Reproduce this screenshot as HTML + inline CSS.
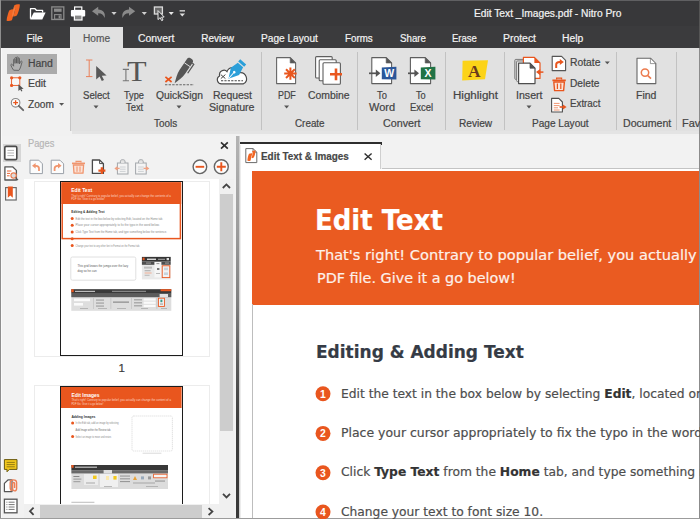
<!DOCTYPE html>
<html><head><meta charset="utf-8"><title>Nitro Pro</title>
<style>
*{box-sizing:border-box;margin:0;padding:0}
html,body{width:700px;height:519px;overflow:hidden;background:#f1f1f1}
body{position:relative;font-family:"Liberation Sans",sans-serif;font-size:12px;color:#444}
.a{position:absolute}
.t{position:absolute;white-space:nowrap;-webkit-text-stroke:0.2px;transform-origin:0 50%}
.sep{position:absolute;top:52px;height:78px;width:1px;background:#c2c2c2}
svg{position:absolute;left:0;top:0;overflow:hidden}
</style></head><body>
<div class="a" style="left:0px;top:0px;width:700px;height:48px;background:#38383a;border-top:1px solid #606062"></div>
<div class="a" style="left:0px;top:26px;width:700px;height:22px;background:#3b3b3d;"></div>
<div class="a" style="left:70px;top:27px;width:53px;height:22px;background:#e1e1e1;"></div>
<div class="a" style="left:0px;top:48px;width:72px;height:88px;background:#f1f1f1;"></div>
<div class="a" style="left:71px;top:48px;width:629px;height:82.6px;background:#e1e1e1;"></div>
<div class="a" style="left:70px;top:49px;width:1px;height:82px;background:#c6c6c6;"></div>
<div class="a" style="left:71.5px;top:130.6px;width:628.5px;height:3.8px;background:#e4e4e4;"></div>
<div class="sep" style="left:261px"></div>
<div class="sep" style="left:357px"></div>
<div class="sep" style="left:445px"></div>
<div class="sep" style="left:504px"></div>
<div class="sep" style="left:616px"></div>
<div class="sep" style="left:676px"></div>
<div class="a" style="left:7px;top:54px;width:50px;height:20px;background:#ababab;"></div>
<div class="a" style="left:0px;top:136px;width:700px;height:383px;background:#f2f2f2;"></div>
<div class="a" style="left:3px;top:144px;width:18px;height:18px;background:#d6d6d6;"></div>
<div class="a" style="left:24px;top:179px;width:195px;height:325px;background:#ffffff;"></div>
<div class="a" style="left:219px;top:179px;width:15px;height:325px;background:#f0f0f0;"></div>
<div class="a" style="left:220px;top:194px;width:13px;height:237px;background:#cdcdcd;"></div>
<div class="a" style="left:24px;top:504px;width:195px;height:14px;background:#f0f0f0;"></div>
<div class="a" style="left:40px;top:505px;width:162px;height:13px;background:#cdcdcd;"></div>
<div class="a" style="left:219px;top:504px;width:15px;height:14px;background:#f0f0f0;"></div>
<div class="a" style="left:238.4px;top:136px;width:1.4px;height:383px;background:#d2d2d2;"></div>
<div class="a" style="left:236px;top:136px;width:2.5px;height:383px;background:linear-gradient(#b4b4b4 0,#9c9c9c 94px,#808080 164px,#5c5c5c 224px,#3e3e3e 284px,#383838 383px);"></div>
<div class="a" style="left:240px;top:141.8px;width:142px;height:2.8px;background:#2e2e2e;"></div>
<div class="a" style="left:240px;top:144px;width:141px;height:25px;background:#ffffff;border-right:1px solid #cfcfcf"></div>
<div class="a" style="left:382px;top:168px;width:318px;height:1.5px;background:#c4c4c4;"></div>
<div class="a" style="left:240px;top:169px;width:460px;height:350px;background:#ffffff;"></div>
<div class="a" style="left:239.8px;top:144.6px;width:1.6px;height:375px;background:#ececec;"></div>
<div class="a" style="left:252px;top:171px;width:448px;height:133.5px;background:#ea5b21;"></div>
<div class="a" style="left:252px;top:304px;width:1px;height:215px;background:#bdbdbd;"></div>
<div class="a" style="left:0px;top:0px;width:1px;height:519px;background:#8e8e8e;"></div>
<div class="a" style="left:1px;top:48px;width:1px;height:471px;background:#fafafa;"></div>
<div class="a" style="left:698.7px;top:0px;width:1.3px;height:48px;background:#555555;"></div>
<div class="a" style="left:698.7px;top:48px;width:1.3px;height:471px;background:#8c8c8c;"></div>
<div class="a" style="left:0px;top:517.6px;width:700px;height:1.4px;background:#9c9c9c;"></div>
<div class="a" style="left:34px;top:180.5px;width:176px;height:176px;background:#fff;border:1px solid #ececec"></div>
<div class="a" style="left:60px;top:181px;width:122.5px;height:175px;background:#fff;border:1.5px solid #1c1c1c"></div>
<div class="a" style="left:34px;top:384.5px;width:176px;height:130px;background:#fff;border:1px solid #ececec;border-bottom:0"></div>
<div class="a" style="left:60px;top:386px;width:122.5px;height:125px;background:#fff;border:1.5px solid #1c1c1c;border-bottom:0"></div>
<div class="a" style="left:24px;top:504px;width:195px;height:14px;background:#f0f0f0;"></div>
<div class="a" style="left:40px;top:505px;width:162px;height:13px;background:#cdcdcd;"></div>
<svg width="700" height="519" viewBox="0 0 700 519"><path d="M9.2,10.4 C11,9.2 13,8.9 14.6,9.3 L12.9,16.4 C12.9,16.4 12.6,18.6 11.9,20.2 C10.2,21 8.2,21.1 6.6,20.7 C6.7,18.6 7.1,16.8 7.7,15 C8.1,13.2 8.5,11.8 9.2,10.4 Z" fill="#f26522"/>
<path d="M14.4,5.3 C16,4.3 18,4 19.9,4.5 C19.8,6.6 19.4,8.6 18.8,10.6 C18.3,12.4 17.6,14.2 16.8,15.6 C15.6,16.3 14.4,16.6 13.4,16.5 L15.2,9.2 C15.2,9.2 13.9,6.8 14.4,5.3 Z" fill="#f26522"/>
<path d="M13.4,16.5 L15.2,9.2 L14.4,5.3 C13.6,7 13.2,9 12.9,10.8 C12.4,12.6 12.1,14.4 11.9,16.2 C12.4,16.4 12.9,16.5 13.4,16.5 Z" fill="#f47a3c"/>
<path d="M30.5,18.8 V8.7 H35 L36.4,10.3 H42.6 V12.6" fill="none" stroke="#fff" stroke-width="1.3" stroke-linejoin="round"/>
<path d="M33.8,12.4 H45.6 L42.3,19.4 H30.2 Z" fill="#fff"/>
<rect x="51.8" y="6.9" width="12" height="12.6" fill="none" stroke="#8c8c8c" stroke-width="1.3"/>
<rect x="54" y="8.6" width="7.6" height="3.2" fill="#8c8c8c"/>
<rect x="54.6" y="14.6" width="6.4" height="4.6" fill="none" stroke="#8c8c8c" stroke-width="1.1"/>
<rect x="58.6" y="15.4" width="1.6" height="3" fill="#8c8c8c"/>
<rect x="74.6" y="7" width="7.2" height="3.4" fill="#38383a" stroke="#fff" stroke-width="1.2"/>
<rect x="70.9" y="10" width="14.3" height="6.4" rx="1" fill="#fff"/>
<rect x="74.4" y="15" width="7.6" height="5" fill="#8a8a8a" stroke="#fff" stroke-width="1.2"/>
<path d="M92,11.2 L98.2,6.8 V9.6 C103.2,9.6 105.8,13.2 104.6,18 C103.6,14.8 101.8,13.2 98.2,13.2 V15.8 Z" fill="#8a8a8a"/>
<path d="M135.2,11.2 L129,6.8 V9.6 C124,9.6 121.4,13.2 122.6,18 C123.6,14.8 125.4,13.2 129,13.2 V15.8 Z" fill="#8a8a8a"/>
<path d="M111.4,11.9 H116.6 L114,14.9 Z" fill="#cfcfcf"/>
<path d="M141.70000000000002,11.9 H146.9 L144.3,14.9 Z" fill="#cfcfcf"/>
<path d="M168.6,11.9 H173.79999999999998 L171.2,14.9 Z" fill="#e6e6e6"/>
<rect x="154.4" y="7" width="8" height="7" fill="#6a6a6a" stroke="#dcdcdc" stroke-width="1.3"/>
<path d="M158,10.6 L158,19.6 L160.2,17.6 L161.6,20.6 L163,20 L161.6,17.2 L164.2,17 Z" fill="#38383a" stroke="#e8e8e8" stroke-width="1"/>
<rect x="179.6" y="10.2" width="5.4" height="1.3" fill="#e0e0e0"/>
<path d="M179.60000000000002,13.4 H185.0 L182.3,16.4 Z" fill="#e0e0e0"/>
<path d="M13.6,70.2 C12.4,68.6 11.4,66.6 10.9,65.2 C10.6,64.2 11.8,63.8 12.4,64.6 L13.6,66.2 V59.6 C13.6,58.6 15,58.6 15,59.6 V63.4 V58.2 C15,57.2 16.5,57.2 16.5,58.2 V63.2 V57.6 C16.5,56.6 18,56.6 18,57.6 V63.4 V58.6 C18,57.6 19.5,57.6 19.5,58.6 V64 L20.6,61.6 C21,60.6 22.4,61 22,62.2 L20.6,67 C20.2,68.6 19.4,69.6 18.8,70.4 Z" fill="#b2b2b2" stroke="#5e5e5e" stroke-width="0.9" stroke-linejoin="round"/>
<rect x="11.6" y="77.8" width="8.2" height="7.6" fill="#f8f8f8" stroke="#e9561e" stroke-width="0.9"/>
<circle cx="11.6" cy="77.8" r="1.6" fill="#e9561e"/>
<circle cx="19.8" cy="77.8" r="1.6" fill="#e9561e"/>
<circle cx="11.6" cy="85.4" r="1.6" fill="#e9561e"/>
<path d="M18.4,84.2 V91 L20.2,89.4 L21.4,91.6 L22.4,91 L21.4,89 L23.6,88.8 Z" fill="#555"/>
<circle cx="15.6" cy="102.8" r="4.3" fill="#fafafa" stroke="#8a8a8a" stroke-width="1.1"/>
<path d="M18.8,105.8 L23.2,110.2" stroke="#666" stroke-width="1.8" stroke-linecap="round"/>
<path d="M13.2,102.6 H18 M15.6,100.2 V105" stroke="#e9561e" stroke-width="1.3"/>
<path d="M59.1,103.0 H64.1 L61.6,105.80000000000001 Z" fill="#555"/>
<path d="M86,60 H92.4 M86,76.6 H92.4 M89.2,60 V76.6" stroke="#e9825c" stroke-width="1" fill="none"/>
<path d="M96.2,66 V79.6 L99.6,76.6 L101.8,81 L104,80 L101.8,75.8 L106.6,75.4 Z" fill="#585858"/>
<path d="M93.5,105.6 H98.5 L96,108.4 Z" fill="#555"/>
<path d="M122.8,69.4 H129 M122.8,80.8 H129 M125.9,69.4 V80.8" stroke="#777" stroke-width="1.1" fill="none"/>
<text x="127" y="81.3" font-family="Liberation Serif,serif" font-size="30" fill="#565656" textLength="19.6" lengthAdjust="spacingAndGlyphs">T</text>
<g transform="translate(0.6 0) rotate(34 183 70)"><path d="M179.6,58.6 C179.6,55.6 186.4,55.6 186.4,58.6 V72 C186.4,77 184.2,82 183,86 C181.8,82 179.6,77 179.6,72 Z" fill="#565656"/><path d="M179.6,63.6 H186.4" stroke="#e1e1e1" stroke-width="0.9"/><path d="M188.2,59 V70.4" stroke="#565656" stroke-width="1.3"/><path d="M186.4,59.6 H188.2" stroke="#565656" stroke-width="1.1"/></g>
<path d="M165.4,76.8 L171.6,82 M171.6,76.8 L165.4,82" stroke="#e9561e" stroke-width="1.7"/>
<path d="M165,84.7 H194" stroke="#666" stroke-width="1.1" stroke-dasharray="2.4,1.2"/>
<path d="M176.5,105.6 H181.5 L179,108.4 Z" fill="#555"/>
<path d="M221.4,83.8 C217.4,83.8 215.6,78.4 219.6,76 C218.6,71 224.4,68.6 227,71.6 C229.4,65.6 238.6,66.4 239.6,72.6 C246.4,71.8 249.2,81 243.4,83.8 Z" fill="#fff" stroke="#4a4a4a" stroke-width="1.2"/>
<path d="M220.8,74.6 L225.4,78.6 M225.4,74.6 L220.8,78.6" stroke="#444" stroke-width="1"/>
<path d="M221,80.8 H243" stroke="#444" stroke-width="1.1" stroke-dasharray="2.2,1.2"/>
<g transform="translate(-0.6 0.8) rotate(41 236 70) translate(236 70) scale(1.1) translate(-236 -70)"><path d="M232.4,59.2 H239.6 V62 H232.4 Z M232.8,63 H239.2 L241,70.6 L236,79.6 L231,70.6 Z" fill="#2b9fd9"/><path d="M236,79 V72.4" stroke="#fff" stroke-width="0.9"/><circle cx="236" cy="71.6" r="1.2" fill="#fff"/></g>
<path d="M276.6,57.6 H290.20000000000005 L295.6,63.0 V83.6 H276.6 Z" fill="#fff" stroke="#666" stroke-width="1.1" stroke-linejoin="round"/>
<path d="M290.20000000000005,57.6 L295.6,63.0 H290.20000000000005 Z" fill="#555" stroke="#666" stroke-width="0.66" stroke-linejoin="round"/>
<path d="M284.20,73.60 L296.60,73.60 M286.02,69.22 L294.78,77.98 M290.40,67.40 L290.40,79.80 M294.78,69.22 L286.02,77.98 " stroke="#e9561e" stroke-width="2"/>
<path d="M284.1,105.6 H289.1 L286.6,108.4 Z" fill="#555"/>
<rect x="315.6" y="56.6" width="16.599999999999966" height="21.4" rx="1" fill="#fff" stroke="#5e5e5e" stroke-width="1.1"/>
<rect x="319.2" y="59.8" width="17.0" height="21.0" rx="1" fill="#fff" stroke="#5e5e5e" stroke-width="1.1"/>
<rect x="323" y="62.8" width="17.399999999999977" height="21.400000000000006" rx="1" fill="#fff" stroke="#5e5e5e" stroke-width="1.1"/>
<path d="M330,74.3 H342 M336,68.4 V80.2" stroke="#e9561e" stroke-width="2.6"/>
<path d="M371.8,57.6 H386.20000000000005 L391.6,63.0 V83.6 H371.8 Z" fill="#fff" stroke="#5e5e5e" stroke-width="1.1" stroke-linejoin="round"/>
<path d="M386.20000000000005,57.6 L391.6,63.0 H386.20000000000005 Z" fill="#555" stroke="#5e5e5e" stroke-width="0.66" stroke-linejoin="round"/>
<path d="M369,73.3 H377.4" stroke="#555" stroke-width="1.7"/><path d="M375.79999999999995,69.6 L380.4,73.3 L375.79999999999995,77 Z" fill="#555"/>
<path d="M381.8,67.4 L396.4,66.8 V79.6 L381.8,79.2 Z" fill="#2b579a"/>
<text x="389.1" y="77.2" font-family="Liberation Sans,sans-serif" font-size="10.5" font-weight="bold" fill="#fff" text-anchor="middle">W</text>
<path d="M410.4,57.6 H425.20000000000005 L430.6,63.0 V83.6 H410.4 Z" fill="#fff" stroke="#5e5e5e" stroke-width="1.1" stroke-linejoin="round"/>
<path d="M425.20000000000005,57.6 L430.6,63.0 H425.20000000000005 Z" fill="#555" stroke="#5e5e5e" stroke-width="0.66" stroke-linejoin="round"/>
<path d="M408,73.3 H416" stroke="#555" stroke-width="1.7"/><path d="M414.4,69.6 L419,73.3 L414.4,77 Z" fill="#555"/>
<path d="M420.8,67.4 L435.4,66.8 V79.6 L420.8,79.2 Z" fill="#217346"/>
<text x="428.1" y="77.2" font-family="Liberation Sans,sans-serif" font-size="10.5" font-weight="bold" fill="#fff" text-anchor="middle">X</text>
<path d="M462.6,60.8 L488,60.2 L485,79.2 L462.2,80.4 Z" fill="#fcd318"/>
<text x="474.3" y="77.2" font-family="Liberation Serif,serif" font-size="17.4" font-weight="bold" fill="#6a3a1c" text-anchor="middle">A</text>
<rect x="514.8" y="59.4" width="14" height="20" rx="1" fill="#d2d2d2" stroke="#7c7c7c" stroke-width="1"/>
<rect x="516.6" y="61" width="14" height="20.6" rx="1" fill="#ececec" stroke="#7c7c7c" stroke-width="1"/>
<path d="M523.4,57.4 H534.4 L540,63 V78.4 H523.4 Z" fill="#fff" stroke="#e9561e" stroke-width="1.2" stroke-linejoin="round"/>
<path d="M534.4,57.4 L540,63 H534.4 Z" fill="#e9561e"/>
<path d="M518.6,63.2 H530 L535,68.2 V83.6 H518.6 Z" fill="#fff" stroke="#4e4e4e" stroke-width="1.2" stroke-linejoin="round"/>
<path d="M530,63.2 L535,68.2 H530 Z" fill="#555" stroke="#4e4e4e" stroke-width="0.72" stroke-linejoin="round"/>
<path d="M543.4,72.1 H538.6" stroke="#e9561e" stroke-width="1.5"/><path d="M540.2,69 L536,72.1 L540.2,75.2 Z" fill="#e9561e"/>
<path d="M526.5,105.6 H531.5 L529,108.4 Z" fill="#555"/>
<path d="M552.2,56.4 H561.6 L565.6,60.4 V70.6 H552.2 Z" fill="#fff" stroke="#555" stroke-width="1.1" stroke-linejoin="round"/>
<path d="M556.2,68 V64.6 C556.2,62.6 557.6,62 559.6,62 H560.2" fill="none" stroke="#e9561e" stroke-width="2"/><path d="M559.8,59 L563.8,62 L559.8,65 Z" fill="#e9561e"/>
<path d="M604.8,61.5 H609.8 L607.3,64.3 Z" fill="#555"/>
<path d="M552.4,80.4 H565.8" stroke="#e9561e" stroke-width="1.8"/><path d="M556.6,79.4 V78.2 H561.6 V79.4" fill="none" stroke="#e9561e" stroke-width="1.2"/>
<path d="M553.8,82 H564.4 L563.6,90.6 H554.6 Z" fill="#fbe3d8" stroke="#e9561e" stroke-width="1.4" stroke-linejoin="round"/>
<path d="M557.4,83.6 V89 M560.8,83.6 V89" stroke="#e9561e" stroke-width="1.2"/>
<path d="M551.6,98.4 H558.8 L562.4,102.0 V112 H551.6 Z" fill="#fff" stroke="#4e4e4e" stroke-width="1.1" stroke-linejoin="round"/>
<path d="M553.8,103.4 H559.6 M553.8,105.6 H559.6 M553.8,107.8 H558 M553.8,110 H559.6" stroke="#ef8a62" stroke-width="0.9"/>
<path d="M559.6,107 H563.6" stroke="#e9561e" stroke-width="1.6"/><path d="M563,104.4 L566.6,107 L563,109.6 Z" fill="#e9561e"/>
<path d="M637,58.2 H650.4 L655.8,63.6 V83.6 H637 Z" fill="#fff" stroke="#666" stroke-width="1.1" stroke-linejoin="round"/>
<path d="M650.4,58.2 L655.8,63.6 H650.4 Z" fill="#fff" stroke="#666" stroke-width="0.66" stroke-linejoin="round"/>
<circle cx="645" cy="72.6" r="3.7" fill="none" stroke="#ec7b4e" stroke-width="1.5"/><path d="M647.8,75.6 L651,78.6" stroke="#ec7b4e" stroke-width="1.6"/>
<rect x="4.8" y="146.4" width="12" height="13.2" rx="1.4" fill="#fff" stroke="#4c4c4c" stroke-width="1.6"/>
<path d="M7.4,150.4 H14 M7.4,153 H14 M7.4,155.6 H14" stroke="#b5b5b5" stroke-width="1"/>
<path d="M4.9,166.8 H12.6 L16.4,170.4 V180 H4.9 Z" fill="#fff" stroke="#555" stroke-width="1.3" stroke-linejoin="round"/>
<path d="M7,171 H11.4 M7,173.4 H10 M7,175.8 H9.6" stroke="#e9561e" stroke-width="0.9"/>
<circle cx="13.6" cy="175.6" r="2.7" fill="#dcdcdc" stroke="#ec7b4e" stroke-width="1.1"/><path d="M15.6,177.6 L18,180.2" stroke="#555" stroke-width="1.2"/>
<rect x="5.6" y="187.6" width="10.6" height="12.4" fill="#fff" stroke="#6a6a6a" stroke-width="1.2"/>
<path d="M7.8,186.4 H12.8 V197.8 L10.3,195.4 L7.8,197.8 Z" fill="#e9561e"/>
<path d="M4.4,459.6 H17 V469.4 H9.4 L7,471.8 V469.4 H4.4 Z" fill="#f2c81e" stroke="#6a5a10" stroke-width="1" stroke-linejoin="round"/>
<path d="M6.6,462.4 H14.8 M6.6,464.6 H14.8 M6.6,466.8 H14.8" stroke="#8a7412" stroke-width="0.9"/>
<path d="M4.4,483.4 L8.2,479.8 H12 V491.6 H4.4 Z" fill="#fff" stroke="#555" stroke-width="1.2" stroke-linejoin="round"/>
<path d="M12,490.6 C10.4,490.6 10.2,489 10.2,487.6 V482.6 C10.2,479 16.6,479 16.6,482.6 V488.4 C16.6,491.6 12.6,491.6 12.6,488.6 V483.6 C12.6,482.2 14.6,482.2 14.6,483.6 V488" fill="none" stroke="#ee7f55" stroke-width="1.4"/>
<rect x="4.4" y="499.2" width="12.6" height="13.6" fill="#fff" stroke="#555" stroke-width="1.3"/>
<path d="M8.6,502.2 H14.6 M8.6,504.6 H14.6 M8.6,507 H14.6 M8.6,509.4 H14.6" stroke="#777" stroke-width="1"/><path d="M6.4,502.2 H7.4 M6.4,504.6 H7.4 M6.4,507 H7.4 M6.4,509.4 H7.4" stroke="#777" stroke-width="1"/>
<path d="M30,160.2 H38.8 L42.4,163.79999999999998 V173.6 H30 Z" fill="#fcfcfc" stroke="#9aa0a8" stroke-width="1" stroke-linejoin="round"/>
<path d="M39,171 V168.4 C39,166.4 37.8,165.8 36,165.8 H35" fill="none" stroke="#f0956e" stroke-width="1.8"/><path d="M35.6,163 L32,165.8 L35.6,168.6 Z" fill="#f0956e"/>
<path d="M51.2,160.2 H60.0 L63.6,163.79999999999998 V173.6 H51.2 Z" fill="#fcfcfc" stroke="#9aa0a8" stroke-width="1" stroke-linejoin="round"/>
<path d="M54.6,171 V168.4 C54.6,166.4 55.8,165.8 57.6,165.8 H58.6" fill="none" stroke="#f0956e" stroke-width="1.8"/><path d="M58,163 L61.6,165.8 L58,168.6 Z" fill="#f0956e"/>
<path d="M72,163.4 H85" stroke="#f0956e" stroke-width="1.7"/><path d="M76,162.6 V161.4 H81 V162.6" fill="none" stroke="#f0956e" stroke-width="1.1"/>
<path d="M73.4,165 H83.6 L83,173.2 H74 Z" fill="#fbe3d8" stroke="#f0956e" stroke-width="1.3" stroke-linejoin="round"/><path d="M77,166.6 V171.8 M80,166.6 V171.8" stroke="#f0956e" stroke-width="1.1"/>
<path d="M92.4,160 H99.6 L103.4,163.6 V173.4 H92.4 Z" fill="#fff" stroke="#4a4a4a" stroke-width="1.3" stroke-linejoin="round"/><path d="M99.6,160 V163.6 H103.4" fill="none" stroke="#4a4a4a" stroke-width="1"/>
<path d="M98.4,170.6 H105.4 M101.9,167.2 V174" stroke="#e9561e" stroke-width="2.4"/>
<rect x="117.4" y="163" width="10.6" height="11" fill="#f4f4f4" stroke="#a2a6aa" stroke-width="1"/>
<path d="M120.4,163 V161.2 C120.4,159.2 125.0,159.2 125.0,161.2 V163" fill="#e4e4e4" stroke="#a2a6aa" stroke-width="1"/>
<path d="M119.80000000000001,167 H125.60000000000001 M119.80000000000001,169.2 H125.60000000000001 M119.80000000000001,171.4 H125.60000000000001" stroke="#c4c8cc" stroke-width="0.8"/>
<path d="M119.6,168.4 H116" stroke="#f0a080" stroke-width="1.3"/><path d="M117.4,166 L114.4,168.4 L117.4,170.8 Z" fill="#f0a080"/>
<rect x="135.6" y="163" width="10.6" height="11" fill="#f4f4f4" stroke="#a2a6aa" stroke-width="1"/>
<path d="M138.6,163 V161.2 C138.6,159.2 143.2,159.2 143.2,161.2 V163" fill="#e4e4e4" stroke="#a2a6aa" stroke-width="1"/>
<path d="M138.0,167 H143.79999999999998 M138.0,169.2 H143.79999999999998 M138.0,171.4 H143.79999999999998" stroke="#c4c8cc" stroke-width="0.8"/>
<path d="M143.6,168.4 H147" stroke="#f0a080" stroke-width="1.3"/><path d="M146,166 L149.4,168.4 L146,170.8 Z" fill="#f0a080"/>
<circle cx="199.9" cy="166.8" r="6.8" fill="#fcfcfc" stroke="#666" stroke-width="1.4"/><path d="M195.6,166.8 H204.2" stroke="#e9561e" stroke-width="1.9"/>
<circle cx="221.3" cy="166.8" r="7" fill="#fcfcfc" stroke="#666" stroke-width="1.4"/><path d="M216.8,166.8 H225.8 M221.3,162.3 V171.3" stroke="#e9561e" stroke-width="1.9"/>
<path d="M221,142.4 L227.8,148.6 M227.8,142.4 L221,148.6" stroke="#2e2e2e" stroke-width="1.7"/>
<path d="M222.8,188 L226.4,184.4 L230,188" fill="none" stroke="#444" stroke-width="1.8"/>
<path d="M223,493.8 L226.5,497.4 L230,493.8" fill="none" stroke="#444" stroke-width="1.8"/>
<path d="M33.6,507.6 L30,511.2 L33.6,514.8" fill="none" stroke="#444" stroke-width="1.8"/>
<path d="M208.6,508.2 L212.4,511.6 L208.6,515" fill="none" stroke="#444" stroke-width="1.8"/>
<rect x="61.4" y="182.4" width="119.8" height="21.6" fill="#e9561e"/>
<text x="71.2" y="191.8" font-family="Liberation Sans,sans-serif" font-size="5" font-weight="bold" fill="#fff" textLength="21" lengthAdjust="spacingAndGlyphs">Edit Text</text>

<rect x="62.2" y="183" width="118.2" height="55.6" fill="none" stroke="#e9561e" stroke-width="1.5"/>
<text x="71.3" y="196.6" font-family="Liberation Sans,sans-serif" font-size="3.1" font-weight="normal" fill="#fbd5c3" textLength="99.6" lengthAdjust="spacingAndGlyphs">That's right! Contrary to popular belief, you actually can change the contents of a</text>
<text x="71.3" y="200.4" font-family="Liberation Sans,sans-serif" font-size="3.1" font-weight="normal" fill="#fbd5c3" textLength="33.4" lengthAdjust="spacingAndGlyphs">PDF file. Give it a go below!</text>
<text x="71.3" y="213.4" font-family="Liberation Sans,sans-serif" font-size="4.4" font-weight="bold" fill="#333" textLength="33.3" lengthAdjust="spacingAndGlyphs">Editing &amp; Adding Text</text>
<circle cx="72.2" cy="218.4" r="1.5" fill="#e9561e"/>
<text x="75.6" y="219.5" font-family="Liberation Sans,sans-serif" font-size="3.1" font-weight="normal" fill="#8a8a8a" textLength="87.4" lengthAdjust="spacingAndGlyphs">Edit the text in the box below by selecting Edit, located on the Home tab.</text>
<circle cx="72.2" cy="225.2" r="1.5" fill="#e9561e"/>
<text x="75.6" y="226.29999999999998" font-family="Liberation Sans,sans-serif" font-size="3.1" font-weight="normal" fill="#8a8a8a" textLength="84.0" lengthAdjust="spacingAndGlyphs">Place your cursor appropriately to fix the typo in the word below.</text>
<circle cx="72.2" cy="232" r="1.5" fill="#e9561e"/>
<text x="75.6" y="233.1" font-family="Liberation Sans,sans-serif" font-size="3.1" font-weight="normal" fill="#8a8a8a" textLength="91.4" lengthAdjust="spacingAndGlyphs">Click Type Text from the Home tab, and type something below the sentence.</text>
<circle cx="72.2" cy="245.6" r="1.5" fill="#e9561e"/>
<text x="75.6" y="246.7" font-family="Liberation Sans,sans-serif" font-size="3.1" font-weight="normal" fill="#8a8a8a" textLength="64.4" lengthAdjust="spacingAndGlyphs">Change your text to any other font in Format on the Format tab.</text>
<circle cx="72.2" cy="238.8" r="1.5" fill="#e9561e"/>
<rect x="70.8" y="257" width="65" height="23.2" rx="1.6" fill="#fff" stroke="#dcdcdc" stroke-width="0.9"/>
<text x="77.6" y="267.4" font-family="Liberation Sans,sans-serif" font-size="3.4" font-weight="normal" fill="#5a5a5a" textLength="50.6" lengthAdjust="spacingAndGlyphs">This grid knows the jumgo over the lazy</text>
<text x="77.6" y="271.8" font-family="Liberation Sans,sans-serif" font-size="3.4" font-weight="normal" fill="#5a5a5a" textLength="19" lengthAdjust="spacingAndGlyphs">dog so he can</text>
<rect x="141.9" y="256.9" width="28.8" height="22.5" fill="#e9e9e9"/><rect x="141.9" y="256.9" width="28.8" height="4.6" fill="#353535"/><rect x="141.9" y="261.5" width="28.8" height="3.3" fill="#4e4e4e"/>
<rect x="142.6" y="257.6" width="2" height="2.6" fill="#e9561e"/>
<rect x="147" y="258.6" width="9" height="1.3" fill="#e8e8e8"/><rect x="158" y="258.8" width="7" height="0.9" fill="#bbb"/><rect x="166.6" y="258" width="2.4" height="2.2" fill="#ddd"/>
<rect x="146" y="262.6" width="5" height="0.9" fill="#aaa"/><rect x="165" y="262.6" width="4" height="0.9" fill="#aaa"/>
<rect x="154.4" y="262" width="7" height="15.4" fill="#f6f6f6"/><rect x="156.4" y="263.2" width="3" height="0.9" fill="#888"/>
<rect x="157" y="268" width="2.4" height="2" fill="#777"/><rect x="156" y="273" width="4" height="0.8" fill="#aaa"/>
<rect x="162.2" y="265.8" width="7.6" height="11.8" fill="#f3f3f3" stroke="#e9561e" stroke-width="0.9"/>
<rect x="164" y="267.6" width="4" height="2.6" fill="#c8d4dc"/><rect x="164" y="272.4" width="4" height="2.6" fill="#c8d4dc"/>
<rect x="144" y="266.6" width="8" height="2" fill="#bdbdbd"/><rect x="144.6" y="270.4" width="6" height="0.8" fill="#999"/><rect x="144.6" y="272.6" width="7" height="0.8" fill="#f0a080"/><rect x="144.6" y="274.8" width="5" height="0.8" fill="#aaa"/>
<rect x="71.3" y="289.2" width="100" height="21.6" fill="#dedede"/><rect x="71.3" y="289.2" width="100" height="4.6" fill="#3a3a3a"/><rect x="71.3" y="293.8" width="100" height="3.4" fill="#5c5c5c"/>
<rect x="71.3" y="289.2" width="2.4" height="3" fill="#e9561e"/><rect x="160.6" y="289.2" width="10.6" height="2" fill="#e9561e"/>
<rect x="75" y="290.8" width="20" height="1.2" fill="#bdbdbd"/><rect x="112" y="290.8" width="34" height="1" fill="#9a9a9a"/>
<rect x="74" y="298.6" width="16" height="2.6" fill="#fafafa"/><rect x="74" y="303" width="9" height="2.6" fill="#fafafa"/>
<rect x="93.4" y="298" width="0.6" height="11" fill="#bcbcbc"/>
<rect x="110.6" y="298" width="0.6" height="11" fill="#bcbcbc"/>
<rect x="131.4" y="298" width="0.6" height="11" fill="#bcbcbc"/>
<rect x="156.6" y="298" width="0.6" height="11" fill="#bcbcbc"/>
<rect x="96" y="299.6" width="8" height="0.9" fill="#8c8c8c"/><rect x="96" y="302.6" width="8" height="0.9" fill="#8c8c8c"/><rect x="96" y="305.6" width="8" height="0.9" fill="#8c8c8c"/>
<rect x="113" y="301.6" width="16" height="1" fill="#7a7a7a"/><rect x="134" y="299.4" width="8" height="0.9" fill="#8c8c8c"/><rect x="134" y="302.4" width="8" height="0.9" fill="#8c8c8c"/><rect x="134" y="305.4" width="8" height="0.9" fill="#8c8c8c"/>
<rect x="143.6" y="298.4" width="12" height="2.2" fill="#fafafa"/><rect x="143.6" y="301.6" width="12" height="2.2" fill="#fafafa"/><rect x="143.6" y="304.8" width="12" height="2.2" fill="#fafafa"/>
<rect x="158.4" y="298.2" width="6" height="8.2" fill="#f4f4f4" stroke="#e9561e" stroke-width="0.9"/><rect x="160.4" y="299.6" width="2" height="2.6" fill="#3a9a8a"/><rect x="160" y="303.6" width="3" height="0.9" fill="#888"/>
<rect x="159.6" y="294" width="8.4" height="3.2" fill="#e4e4e4"/>
<rect x="80" y="308" width="8" height="0.8" fill="#aaa"/><rect x="98" y="308" width="9" height="0.8" fill="#aaa"/><rect x="117" y="308" width="9" height="0.8" fill="#aaa"/><rect x="141" y="308" width="7" height="0.8" fill="#aaa"/><rect x="161" y="308" width="6" height="0.8" fill="#aaa"/>
<rect x="61" y="387" width="120.6" height="21" fill="#e9561e"/>
<text x="71.4" y="396.6" font-family="Liberation Sans,sans-serif" font-size="5.6" font-weight="bold" fill="#fff" textLength="28.2" lengthAdjust="spacingAndGlyphs">Edit Images</text>
<text x="71.4" y="401.4" font-family="Liberation Sans,sans-serif" font-size="3.1" font-weight="normal" fill="#fbd5c3" textLength="99.6" lengthAdjust="spacingAndGlyphs">That's right! Contrary to popular belief, you actually can change the content of a</text>
<text x="71.4" y="405.2" font-family="Liberation Sans,sans-serif" font-size="3.1" font-weight="normal" fill="#fbd5c3" textLength="32" lengthAdjust="spacingAndGlyphs">PDF file. Give it a go below!</text>
<text x="71.4" y="418" font-family="Liberation Sans,sans-serif" font-size="4.4" font-weight="bold" fill="#333" textLength="24" lengthAdjust="spacingAndGlyphs">Adding Images</text>
<circle cx="72.6" cy="423" r="1.5" fill="#e9561e"/>
<text x="75.6" y="424.1" font-family="Liberation Sans,sans-serif" font-size="3.1" font-weight="normal" fill="#8a8a8a" textLength="43" lengthAdjust="spacingAndGlyphs">In the Edit tab, add an image by selecting</text>
<text x="75.6" y="431.1" font-family="Liberation Sans,sans-serif" font-size="3.1" font-weight="normal" fill="#6a6a6a" textLength="35.4" lengthAdjust="spacingAndGlyphs">Add Image within the Review tab.</text>
<circle cx="72.6" cy="436.5" r="1.5" fill="#e9561e"/>
<text x="75.6" y="437.6" font-family="Liberation Sans,sans-serif" font-size="3.1" font-weight="normal" fill="#8a8a8a" textLength="36" lengthAdjust="spacingAndGlyphs">Select an image to move and resize.</text>
<rect x="132" y="416" width="40.4" height="35" rx="1.6" fill="#fff" stroke="#d6d6d6" stroke-width="0.8" stroke-dasharray="1.2,0.8"/>
<rect x="142.6" y="452.8" width="18.8" height="0.7" fill="#c9c9c9"/>
<rect x="71.4" y="465" width="96.6" height="24" fill="#dcdcdc"/><rect x="71.4" y="465" width="96.6" height="5.2" fill="#383838"/><rect x="71.4" y="470.2" width="96.6" height="3.2" fill="#6a6a6a"/>
<rect x="71.4" y="465" width="2.2" height="2.8" fill="#e9561e"/><rect x="75" y="466.6" width="22" height="1.2" fill="#c4c4c4"/>
<rect x="103.6" y="470" width="8.4" height="3.6" fill="#e0e0e0"/>
<rect x="84" y="474" width="14" height="11" fill="#ececec"/><rect x="100" y="474" width="18" height="13" fill="#f0f0f0"/>
<rect x="93" y="475.6" width="3.6" height="3.4" fill="#f2c81e"/><rect x="113.4" y="476" width="3.2" height="3.6" fill="#f2c81e"/><rect x="106" y="476" width="3" height="4" fill="#fbe9b0"/>
<rect x="73.4" y="476" width="6" height="1" fill="#888"/><rect x="73.4" y="478.6" width="8" height="1" fill="#999"/><rect x="73.4" y="481.2" width="7" height="1" fill="#999"/>
<rect x="120" y="475.6" width="10" height="0.9" fill="#888"/><rect x="120" y="478.4" width="10" height="0.9" fill="#888"/><rect x="120" y="481.2" width="10" height="0.9" fill="#888"/>
<path d="M135,476 L137,480 H133 Z" fill="#e8a23a"/><rect x="141" y="476.4" width="3" height="3" fill="#9ab"/><rect x="148" y="476.4" width="3" height="3" fill="#9a9a9a"/>
<rect x="153.6" y="474.2" width="13.4" height="3.6" fill="#f6f6f6" stroke="#e9561e" stroke-width="0.8"/><rect x="155" y="480.6" width="10" height="0.9" fill="#888"/>
<rect x="86" y="482.6" width="9" height="0.8" fill="#999"/><rect x="133" y="482.6" width="22" height="0.8" fill="#999"/><rect x="104" y="486" width="8" height="0.8" fill="#aaa"/><rect x="146" y="486" width="12" height="0.8" fill="#aaa"/>
<rect x="71.4" y="501.8" width="23" height="0.9" fill="#b4b4b4"/>
<path d="M245.8,148.6 H253 L256.8,152.2 V162.6 H245.8 Z" fill="#fff" stroke="#6a6a6a" stroke-width="1" stroke-linejoin="round"/><path d="M253,148.6 V152.2 H256.8" fill="none" stroke="#6a6a6a" stroke-width="0.8"/>
<path d="M249,153.8 C250,153.2 251.4,153 252.4,153.2 L251.2,157.6 L250.6,160.4 C249.6,161 248.4,161 247.4,160.8 C247.5,158.4 248.1,155.8 249,153.8 Z M252.2,151 C253.2,150.4 254.6,150.3 255.6,150.6 C255.5,153 254.8,155.6 253.8,157.6 C253,158 252.2,158.2 251.6,158.1 L252.7,153.4 Z" fill="#f26522"/>
<path d="M364.6,153.4 L371.6,159.8 M371.6,153.4 L364.6,159.8" stroke="#2e2e2e" stroke-width="1.4"/>
<circle cx="323" cy="393.8" r="7.5" fill="#e9561e"/>
<text x="323" y="397.5" font-family="Liberation Sans,sans-serif" font-size="10.4" font-weight="bold" fill="#fff" text-anchor="middle">1</text>
<circle cx="323" cy="433.4" r="7.5" fill="#e9561e"/>
<text x="323" y="437.09999999999997" font-family="Liberation Sans,sans-serif" font-size="10.4" font-weight="bold" fill="#fff" text-anchor="middle">2</text>
<circle cx="323" cy="472.8" r="7.5" fill="#e9561e"/>
<text x="323" y="476.5" font-family="Liberation Sans,sans-serif" font-size="10.4" font-weight="bold" fill="#fff" text-anchor="middle">3</text>
<circle cx="323" cy="512" r="7.5" fill="#e9561e"/>
<text x="323" y="515.7" font-family="Liberation Sans,sans-serif" font-size="10.4" font-weight="bold" fill="#fff" text-anchor="middle">4</text></svg>
<div class="t " id="t0" style="left:474.3px;top:8.1px;font-size:10px;line-height:12px;color:#f3f3f3;transform:scaleX(1.021);">Edit Text _Images.pdf - Nitro Pro</div>
<div class="t " id="t1" style="left:26.4px;top:33.2px;font-size:10px;line-height:12px;color:#f3f3f3;">File</div>
<div class="t " id="t2" style="left:83.3px;top:33.2px;font-size:10px;line-height:12px;color:#575757;transform:scaleX(1.015);">Home</div>
<div class="t " id="t3" style="left:137.8px;top:33.2px;font-size:10px;line-height:12px;color:#f3f3f3;transform:scaleX(1.040);">Convert</div>
<div class="t " id="t4" style="left:201.3px;top:33.2px;font-size:10px;line-height:12px;color:#f3f3f3;">Review</div>
<div class="t " id="t5" style="left:261.3px;top:33.2px;font-size:10px;line-height:12px;color:#f3f3f3;transform:scaleX(1.013);">Page Layout</div>
<div class="t " id="t6" style="left:345.3px;top:33.2px;font-size:10px;line-height:12px;color:#f3f3f3;transform:scaleX(0.977);">Forms</div>
<div class="t " id="t7" style="left:399.8px;top:33.2px;font-size:10px;line-height:12px;color:#f3f3f3;transform:scaleX(0.974);">Share</div>
<div class="t " id="t8" style="left:451.8px;top:33.2px;font-size:10px;line-height:12px;color:#f3f3f3;transform:scaleX(0.953);">Erase</div>
<div class="t " id="t9" style="left:502.7px;top:33.2px;font-size:10px;line-height:12px;color:#f3f3f3;transform:scaleX(1.041);">Protect</div>
<div class="t " id="t10" style="left:562.0px;top:33.2px;font-size:10px;line-height:12px;color:#f3f3f3;transform:scaleX(1.035);">Help</div>
<div class="t " id="t11" style="left:28.0px;top:57.5px;font-size:10px;line-height:12px;color:#444;transform:scaleX(1.042);">Hand</div>
<div class="t " id="t12" style="left:28.0px;top:78.0px;font-size:10px;line-height:12px;color:#444;transform:scaleX(1.044);">Edit</div>
<div class="t " id="t13" style="left:28.0px;top:98.5px;font-size:10px;line-height:12px;color:#444;transform:scaleX(1.017);">Zoom</div>
<div class="t " id="t14" style="left:82.6px;top:89.8px;font-size:10px;line-height:12px;color:#444;transform:scaleX(0.964);">Select</div>
<div class="t " id="t15" style="left:124.3px;top:89.8px;font-size:10px;line-height:12px;color:#444;transform:scaleX(0.922);">Type</div>
<div class="t " id="t16" style="left:125.6px;top:101.9px;font-size:10px;line-height:12px;color:#444;transform:scaleX(0.938);">Text</div>
<div class="t " id="t17" style="left:156.0px;top:89.8px;font-size:10px;line-height:12px;color:#444;transform:scaleX(1.031);">QuickSign</div>
<div class="t " id="t18" style="left:212.5px;top:89.8px;font-size:10px;line-height:12px;color:#444;transform:scaleX(1.047);">Request</div>
<div class="t " id="t19" style="left:209.0px;top:101.9px;font-size:10px;line-height:12px;color:#444;transform:scaleX(1.063);">Signature</div>
<div class="t " id="t20" style="left:154.4px;top:117.8px;font-size:10px;line-height:12px;color:#444;transform:scaleX(0.989);">Tools</div>
<div class="t " id="t21" style="left:278.0px;top:89.8px;font-size:10px;line-height:12px;color:#444;transform:scaleX(0.890);">PDF</div>
<div class="t " id="t22" style="left:308.4px;top:89.8px;font-size:10px;line-height:12px;color:#444;transform:scaleX(1.039);">Combine</div>
<div class="t " id="t23" style="left:294.8px;top:117.8px;font-size:10px;line-height:12px;color:#444;transform:scaleX(0.986);">Create</div>
<div class="t " id="t24" style="left:377.0px;top:89.8px;font-size:10px;line-height:12px;color:#444;transform:scaleX(0.937);">To</div>
<div class="t " id="t25" style="left:368.9px;top:101.9px;font-size:10px;line-height:12px;color:#444;transform:scaleX(1.100);">Word</div>
<div class="t " id="t26" style="left:416.0px;top:89.8px;font-size:10px;line-height:12px;color:#444;transform:scaleX(0.918);">To</div>
<div class="t " id="t27" style="left:409.5px;top:101.9px;font-size:10px;line-height:12px;color:#444;transform:scaleX(0.949);">Excel</div>
<div class="t " id="t28" style="left:382.5px;top:117.8px;font-size:10px;line-height:12px;color:#444;transform:scaleX(1.071);">Convert</div>
<div class="t " id="t29" style="left:453.2px;top:89.8px;font-size:10px;line-height:12px;color:#444;transform:scaleX(1.156);">Highlight</div>
<div class="t " id="t30" style="left:458.6px;top:117.8px;font-size:10px;line-height:12px;color:#444;transform:scaleX(1.012);">Review</div>
<div class="t " id="t31" style="left:515.7px;top:89.8px;font-size:10px;line-height:12px;color:#444;transform:scaleX(1.059);">Insert</div>
<div class="t " id="t32" style="left:532.3px;top:117.8px;font-size:10px;line-height:12px;color:#444;transform:scaleX(1.009);">Page Layout</div>
<div class="t " id="t33" style="left:569.6px;top:57.1px;font-size:10px;line-height:12px;color:#444;transform:scaleX(1.035);">Rotate</div>
<div class="t " id="t34" style="left:569.6px;top:78.0px;font-size:10px;line-height:12px;color:#444;transform:scaleX(1.017);">Delete</div>
<div class="t " id="t35" style="left:569.6px;top:98.4px;font-size:10px;line-height:12px;color:#444;transform:scaleX(0.977);">Extract</div>
<div class="t " id="t36" style="left:636.0px;top:89.8px;font-size:10px;line-height:12px;color:#444;transform:scaleX(1.044);">Find</div>
<div class="t " id="t37" style="left:622.9px;top:117.8px;font-size:10px;line-height:12px;color:#444;transform:scaleX(1.060);">Document</div>
<div class="t " id="t38" style="left:682.0px;top:117.8px;font-size:10px;line-height:12px;color:#444;transform:scaleX(1.094);">Favorites</div>
<div class="t " id="t39" style="left:28.4px;top:138.3px;font-size:10px;line-height:12px;color:#b6b6b6;transform:scaleX(0.927);">Pages</div>
<div class="t " id="t40" style="left:260.5px;top:149.0px;font-size:11px;line-height:14px;color:#474747;font-weight:bold;transform:scaleX(0.900);">Edit Text &amp; Images</div>
<div class="t " id="t41" style="left:118.6px;top:361.3px;font-size:11.5px;line-height:14px;color:#3a3a3a;">1</div>
<div class="t " id="t42" style="left:315.4px;top:203.1px;font-size:27.5px;line-height:34px;color:#fff;font-weight:bold;font-family:'DejaVu Sans','Liberation Sans',sans-serif;transform:scaleX(0.945);">Edit Text</div>
<div class="t " id="t43" style="left:316.0px;top:246.3px;font-size:14.6px;line-height:18px;color:#fdf1ea;font-family:'DejaVu Sans','Liberation Sans',sans-serif;">That's right! Contrary to popular belief, you actually can change the</div>
<div class="t " id="t44" style="left:316.5px;top:268.5px;font-size:14.6px;line-height:18px;color:#fdf1ea;font-family:'DejaVu Sans','Liberation Sans',sans-serif;transform:scaleX(0.984);">PDF file. Give it a go below!</div>
<div class="t " id="t45" style="left:316.2px;top:341.4px;font-size:17.4px;line-height:22px;color:#353b45;font-weight:bold;font-family:'DejaVu Sans','Liberation Sans',sans-serif;transform:scaleX(0.977);">Editing &amp; Adding Text</div>
<div class="t " id="t46" style="left:340.9px;top:385.7px;font-size:13px;line-height:16px;color:#4d4d4d;font-family:'DejaVu Sans','Liberation Sans',sans-serif;transform:scaleX(0.943);">Edit the text in the box below by selecting <b style="color:#333">Edit</b>, located on the <b>Home</b> tab.</div>
<div class="t " id="t47" style="left:340.9px;top:425.1px;font-size:13px;line-height:16px;color:#4d4d4d;font-family:'DejaVu Sans','Liberation Sans',sans-serif;transform:scaleX(0.957);">Place your cursor appropriately to fix the typo in the word below.</div>
<div class="t " id="t48" style="left:340.9px;top:464.3px;font-size:13px;line-height:16px;color:#4d4d4d;font-family:'DejaVu Sans','Liberation Sans',sans-serif;transform:scaleX(0.945);">Click <b style="color:#333">Type Text</b> from the <b style="color:#333">Home</b> tab, and type something new.</div>
<div class="t " id="t49" style="left:340.9px;top:503.7px;font-size:13px;line-height:16px;color:#4d4d4d;font-family:'DejaVu Sans','Liberation Sans',sans-serif;transform:scaleX(0.943);">Change your text to font size 10.</div>
</body></html>
